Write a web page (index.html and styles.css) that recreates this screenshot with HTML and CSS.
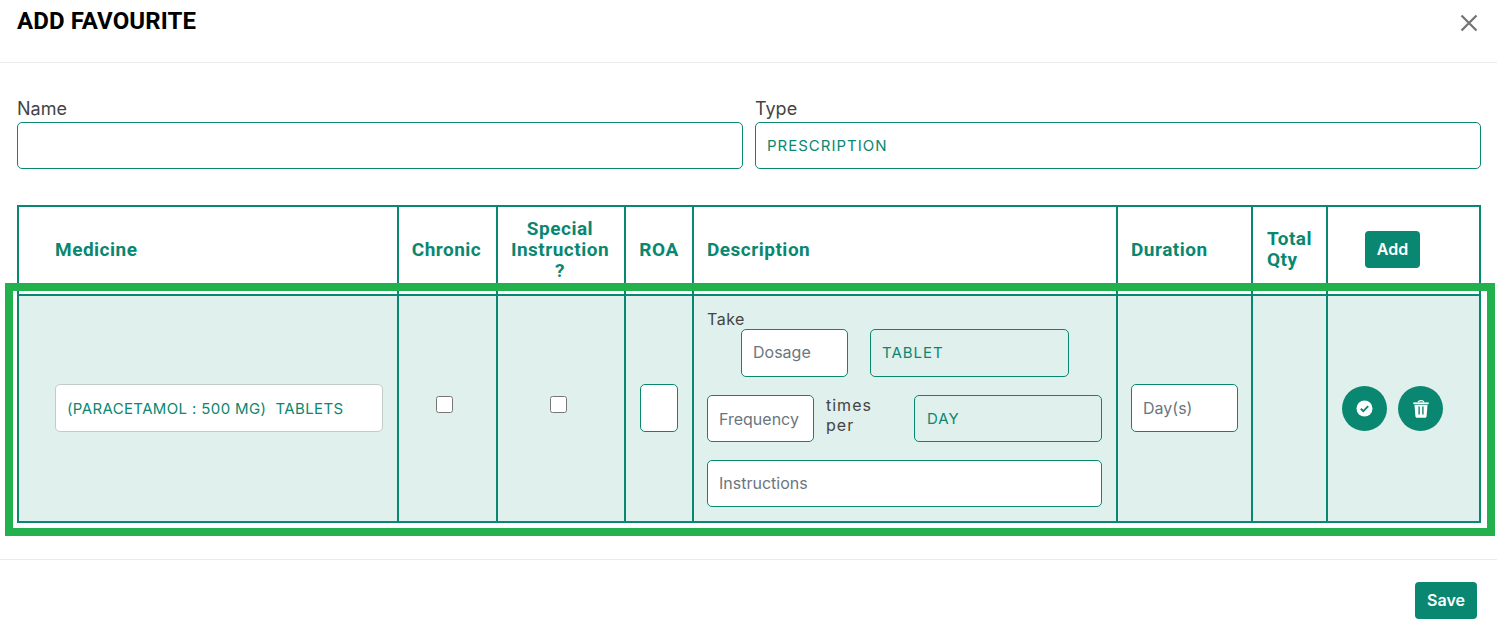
FILE: index.html
```html
<!DOCTYPE html>
<html lang="en">
<head>
<meta charset="utf-8">
<title>Add Favourite</title>
<link rel="stylesheet" href="styles.css">
</head>
<body>
<div class="modal">
  <header class="modal-header">
    <h1 class="modal-title">ADD FAVOURITE</h1>
    <button class="close" type="button" aria-label="Close">
      <svg width="18" height="18" viewBox="0 0 18 18"><path d="M1.500 1.500 16.500 16.500M16.500 1.500 1.500 16.500" stroke="#757575" stroke-width="2.300" fill="none"/></svg>
    </button>
  </header>
  <main class="modal-body">
    <div class="form-row">
      <div class="field">
        <label class="label">Name</label>
        <input class="control" type="text">
      </div>
      <div class="field">
        <label class="label">Type</label>
        <input class="control value" type="text" value="PRESCRIPTION">
      </div>
    </div>
    <div class="table-wrap">
      <table class="grid">
        <colgroup>
          <col class="c1"><col class="c2"><col class="c3"><col class="c4"><col class="c5"><col class="c6"><col class="c7"><col class="c8">
        </colgroup>
        <thead>
          <tr>
            <th class="th-med">Medicine</th>
            <th class="center nudge">Chronic</th>
            <th class="center nudge">Special Instruction ?</th>
            <th class="center">ROA</th>
            <th>Description</th>
            <th>Duration</th>
            <th class="th-qty">Total Qty</th>
            <th class="th-add"><button class="btn" type="button">Add</button></th>
          </tr>
        </thead>
        <tbody>
          <tr>
            <td class="td-med"><input class="ctl-h med-input" type="text" value="(PARACETAMOL : 500 MG)  TABLETS"></td>
            <td class="td-check"><input class="check" type="checkbox"></td>
            <td class="td-check second"><input class="check" type="checkbox"></td>
            <td class="td-roa"><input class="ctl-h ctl" type="text"></td>
            <td class="td-desc">
              <div class="take">Take</div>
              <div class="desc-row indented">
                <input class="ctl-h ctl w107" type="text" placeholder="Dosage">
                <input class="ctl-h ctl readonly tablet" type="text" value="TABLET">
              </div>
              <div class="desc-row tight freq-row">
                <input class="ctl-h ctl w107" type="text" placeholder="Frequency">
                <span class="times">times per</span>
                <input class="ctl-h ctl readonly day" type="text" value="DAY">
              </div>
              <div class="desc-row tight">
                <input class="ctl-h ctl full" type="text" placeholder="Instructions">
              </div>
            </td>
            <td class="td-dur"><input class="ctl-h ctl full dur-input" type="text" placeholder="Day(s)"></td>
            <td></td>
            <td class="td-act">
              <div class="actions">
                <button class="round" type="button" aria-label="Confirm">
                  <svg width="17" height="17" viewBox="0 0 17 17"><circle cx="8.500" cy="8.500" r="8" fill="#fff"/><path d="M4.800 8.800 7.300 11.200 12.200 6.200" stroke="#0a8770" stroke-width="1.900" fill="none"/></svg>
                </button>
                <button class="round" type="button" aria-label="Delete">
                  <svg width="16" height="18" viewBox="0 0 16 18"><path d="M5.200 2.600C5.200 1.300 6 .7 8 .7s2.800.6 2.800 1.900" stroke="#fff" stroke-width="1.200" fill="none"/><path d="M.3 2.400h15.400v1.700H.3z" fill="#fff"/><path fill-rule="evenodd" d="M1.500 4.800h13l-.9 11.500c-.1.900-.7 1.500-1.600 1.500H4c-.9 0-1.500-.6-1.600-1.500zM5.400 6.500v8h1.400v-8zM9.200 6.500v8h1.400v-8z" fill="#fff"/></svg>
                </button>
              </div>
            </td>
          </tr>
        </tbody>
      </table>
      <div class="highlight"></div>
    </div>
  </main>
  <footer class="modal-footer">
    <button class="btn save" type="button">Save</button>
  </footer>
</div>
</body>
</html>
```
FILE: styles.css
```css
* { box-sizing: border-box; }
html, body { margin: 0; padding: 0; background: #fff; }
body { font-family: Inter, "Liberation Sans", sans-serif; color: #444; overflow: hidden; }
.modal { width: 1497px; height: 625px; display: flex; flex-direction: column; }
.modal-header { height: 63px; border-bottom: 1px solid #e9ecef; padding: 0 19px 0 17px; display: flex; justify-content: space-between; align-items: flex-start; }
.modal-title { margin: 8px 0 0; font: 700 24px/26px Roboto, sans-serif; color: #000; letter-spacing: .1px; }
.close { margin-top: 14px; padding: 0; width: 18px; height: 18px; border: 0; background: none; }
.close svg { display: block; }
.modal-body { padding: 35px 16px 0 17px; height: 496px; flex: none; }
.form-row { display: grid; grid-template-columns: 726px 726px; column-gap: 12px; }
.label { display: block; font-size: 18px; line-height: 22px; margin-bottom: 2px; color: #444; }
.control { display: block; width: 100%; height: 47px; border: 1px solid #0a8770; border-radius: 5px; background: #fff; padding: 0 11px; outline: 0; font: 400 15px Inter, sans-serif; }
.value { color: #0a8770; letter-spacing: 1px; }
.table-wrap { position: relative; margin-top: 36px; width: 1464px; }
.grid { border-collapse: collapse; table-layout: fixed; width: 1462px; }
.c1 { width: 380px; } .c2 { width: 99px; } .c3 { width: 128px; } .c4 { width: 68px; }
.c5 { width: 424px; } .c6 { width: 135px; } .c7 { width: 75px; } .c8 { width: 153px; }
.grid th, .grid td { border: 2px solid #0a8770; }
.grid th { height: 89px; padding: 0 13px 2px; text-align: left; font: 700 19px/21px Roboto, sans-serif; letter-spacing: .5px; color: #0a8770; }
.grid .center { text-align: center; padding: 0 8px 2px; }
.grid .nudge { padding: 0 9px 2px 7px; }
.grid .th-med { padding-left: 36px; }
.grid .th-qty { padding: 0 14px 3px; }
.grid .th-add { padding: 0 0 2px 37px; }
.grid td { background: #e0f0ec; height: 227px; padding: 0 14px 1px; vertical-align: middle; }
.grid .td-med { padding: 0 14px 1px 36px; }
.grid .td-dur { padding: 0 13px 1px; }
.grid .td-act { padding: 0 14px; }
.grid .td-check { text-align: center; padding: 0 7px 5px 0; }
.grid .second { padding: 0 5px 5px 0; }
.check { width: 17px; height: 17px; margin: 0; accent-color: #0a8770; }
.ctl-h { display: block; height: 48px; border-radius: 5px; outline: 0; padding: 0 11px 2px; font: 400 16px Inter, sans-serif; background: #fff; min-width: 0; }
.ctl { border: 1px solid #0a8770; width: 100%; }
.ctl::placeholder { color: #6c757d; opacity: 1; }
.med-input { width: 100%; border: 1px solid #c2cbc9; color: #0a8770; font-size: 15px; letter-spacing: .37px; padding-bottom: 0; }
.dur-input { padding-bottom: 0; }
.grid .td-desc { padding: 13px 14px 0 13px; vertical-align: top; }
.take { font-size: 16px; line-height: 20px; color: #444; letter-spacing: .5px; }
.desc-row { display: flex; align-items: center; margin-top: 18px; }
.indented { margin-top: 0; padding-left: 34px; }
.tight .ctl-h { height: 47px; }
.freq-row .ctl-h { padding-bottom: 0; }
.w107 { width: 107px; flex: none; }
.readonly { background: transparent; color: #0a8770; font-size: 15px; letter-spacing: 1px; }
.tablet { width: 199px; flex: none; margin-left: 22px; }
.day { flex: 1; padding-left: 12px; }
.times { align-self: flex-start; width: 100px; flex: none; padding: 0 30px 0 12px; font-size: 16px; line-height: 20px; letter-spacing: 1px; color: #444; }
.actions { display: flex; gap: 11px; }
.round { width: 45px; height: 45px; border-radius: 50%; border: 0; padding: 0; background: #0a8770; display: flex; align-items: center; justify-content: center; }
.btn { width: 55px; height: 37px; border: 0; padding: 0 0 1px; border-radius: 4px; background: #0a8770; color: #fff; font: 600 16px Inter, sans-serif; display: block; }
.highlight { position: absolute; left: -12px; top: 78px; width: 1490px; height: 253px; border: 8px solid #22b14c; pointer-events: none; }
.modal-footer { border-top: 1px solid #e9ecef; padding: 22px 20px 0 0; display: flex; justify-content: flex-end; }
.save { width: 62px; }
```
